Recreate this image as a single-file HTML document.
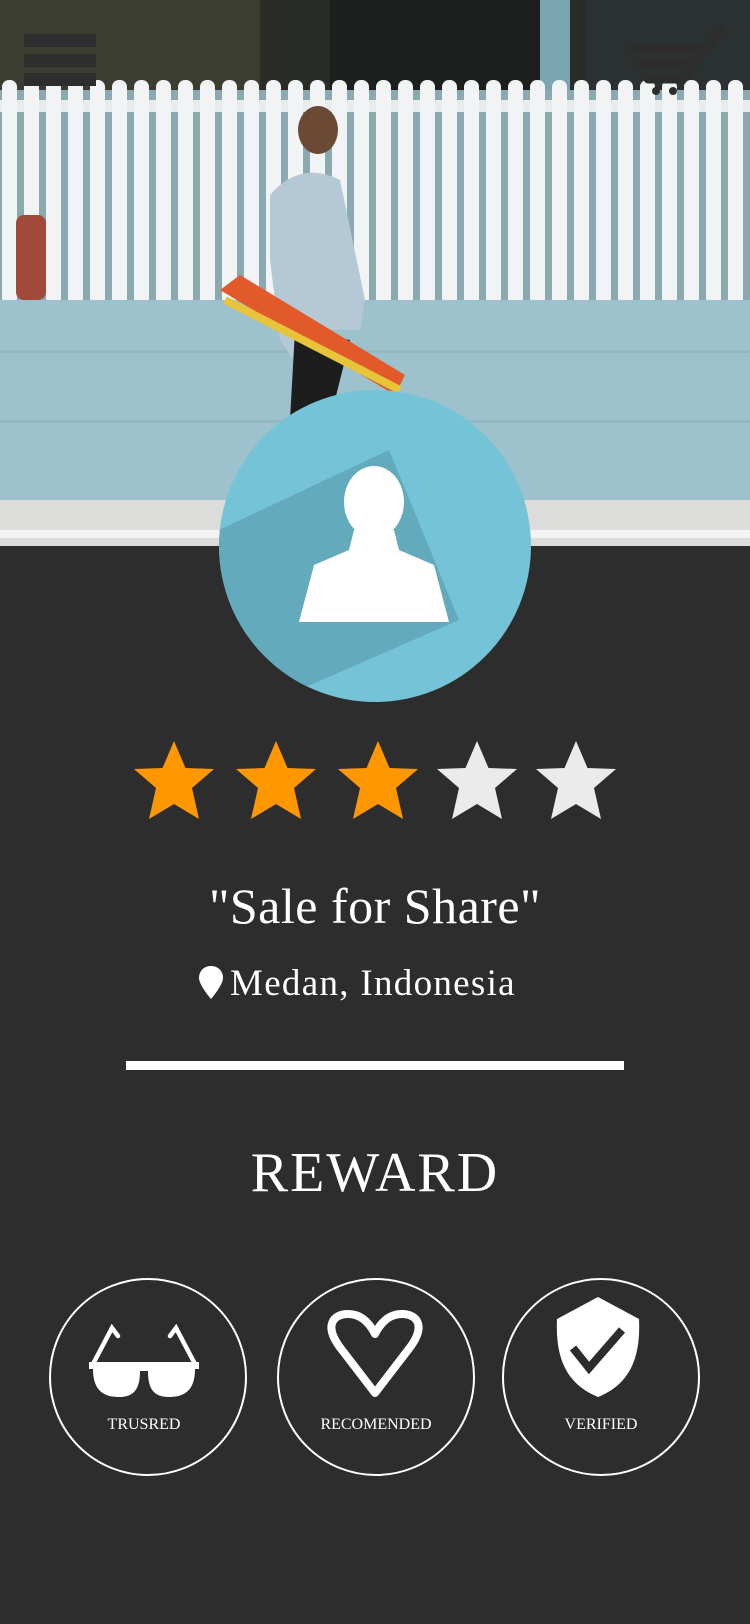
<!DOCTYPE html>
<html><head><meta charset="utf-8"><style>
html,body{margin:0;padding:0;}
body{width:750px;height:1624px;background:#2d2d2d;position:relative;overflow:hidden;font-family:"Liberation Serif",serif;color:#fff;}
.abs{position:absolute;}
.t{position:absolute;left:0;width:750px;text-align:center;white-space:nowrap;}
</style></head><body>
<svg class="abs" style="left:0;top:0" width="750" height="546" viewBox="0 0 750 546">
  <defs>
    <pattern id="fence" x="0" y="0" width="22" height="300" patternUnits="userSpaceOnUse">
      <rect x="2" y="80" width="15" height="225" rx="7" fill="#f1f3f4"/>
    </pattern>
  </defs>
  <rect width="750" height="546" fill="#9cbfcc"/>
  <rect width="750" height="90" fill="#2a2c28"/>
  <rect x="0" y="0" width="260" height="90" fill="#3a3d30"/>
  <rect x="330" y="0" width="210" height="90" fill="#1c1f1e"/>
  <rect x="540" y="0" width="30" height="90" fill="#7aa6b4"/>
  <rect x="585" y="0" width="165" height="90" fill="#2b3130"/>
  <rect x="0" y="90" width="750" height="210" fill="#8aa9b0"/>
  <rect x="0" y="100" width="750" height="12" fill="#e9ecec"/>
  <rect x="0" y="0" width="750" height="305" fill="url(#fence)"/>
  <rect x="0" y="300" width="750" height="200" fill="#9dc1cd"/>
  <rect x="0" y="350" width="750" height="3" fill="#8eb2be" opacity=".6"/>
  <rect x="0" y="420" width="750" height="3" fill="#8eb2be" opacity=".6"/>
  <rect x="0" y="500" width="750" height="46" fill="#dcdcda"/>
  <rect x="0" y="530" width="750" height="8" fill="#f3f3f3"/>
  <rect x="16" y="215" width="30" height="85" rx="8" fill="#a24a3a"/>
  <ellipse cx="318" cy="130" rx="20" ry="24" fill="#6b4a35"/>
  <path d="M270 195 Q300 160 340 180 L365 300 L360 330 L330 330 L300 370 L280 340 L270 260Z" fill="#b5c8d6"/>
  <path d="M295 330 L350 340 L330 420 L300 500 L270 490 L290 420Z" fill="#1d1d1d"/>
  <path d="M220 290 L240 275 L405 375 L395 395Z" fill="#e25a2a"/>
  <path d="M225 300 L400 390" stroke="#e8c43a" stroke-width="8"/>
  <rect x="24" y="34" width="72" height="13" fill="#2d2d2d"/>
  <rect x="24" y="54" width="72" height="13" fill="#2d2d2d"/>
  <rect x="24" y="73" width="72" height="13" fill="#2d2d2d"/>
  <g stroke="#2d2d2d" stroke-width="9" stroke-linecap="round" fill="none">
    <path d="M633 49 H697"/><path d="M641 63 H690"/><path d="M648 79 H683 L721 30"/>
  </g>
  <circle cx="656" cy="91" r="4" fill="#2d2d2d"/><circle cx="673" cy="91" r="4" fill="#2d2d2d"/>
</svg>
<svg class="abs" style="left:219px;top:390px" width="312" height="312" viewBox="0 0 312 312">
  <defs><clipPath id="c"><circle cx="156" cy="156" r="156"/></clipPath></defs>
  <g clip-path="url(#c)">
    <rect width="312" height="312" fill="#74c3d7"/>
    <path d="M0 140 L170 60 L240 230 L80 300 L0 320Z" fill="#63aabc"/>
    <ellipse cx="155" cy="112" rx="30" ry="36" fill="#fff"/>
    <path d="M135 140 L175 140 L180 160 L215 175 L230 232 L80 232 L95 175 L130 160Z" fill="#fff"/>
  </g>
</svg>
<svg class="abs" style="left:0;top:738px" width="750" height="86" viewBox="0 0 750 86">
    <polygon points="0,-40 11.5,-13 40,-12 18,7 25,38 0,23 -25,38 -18,7 -40,-12 -11.5,-13" fill="#ff9800" transform="translate(174,43)"/>
    <polygon points="0,-40 11.5,-13 40,-12 18,7 25,38 0,23 -25,38 -18,7 -40,-12 -11.5,-13" fill="#ff9800" transform="translate(276,43)"/>
    <polygon points="0,-40 11.5,-13 40,-12 18,7 25,38 0,23 -25,38 -18,7 -40,-12 -11.5,-13" fill="#ff9800" transform="translate(378,43)"/>
    <polygon points="0,-40 11.5,-13 40,-12 18,7 25,38 0,23 -25,38 -18,7 -40,-12 -11.5,-13" fill="#ebebeb" transform="translate(477,43)"/>
    <polygon points="0,-40 11.5,-13 40,-12 18,7 25,38 0,23 -25,38 -18,7 -40,-12 -11.5,-13" fill="#ebebeb" transform="translate(576,43)"/>
</svg>
<div class="t" style="top:876px;font-size:50px;line-height:60px;letter-spacing:0.5px;">"Sale for Share"</div>
<svg class="abs" style="left:199px;top:966px" width="24" height="33" viewBox="0 0 24 33"><path d="M12 0 C5 0 0 5 0 12 C0 19 12 33 12 33 C12 33 24 19 24 12 C24 5 19 0 12 0Z" fill="#fff"/></svg>
<div class="abs" style="left:230px;top:963px;font-size:37px;line-height:42px;letter-spacing:1.3px;white-space:nowrap;">Medan, Indonesia</div>
<div class="abs" style="left:126px;top:1061px;width:498px;height:9px;background:#fff;"></div>
<div class="t" style="top:1140px;font-size:56px;line-height:66px;letter-spacing:2px;">REWARD</div>
<svg class="abs" style="left:0;top:1270px" width="750" height="220" viewBox="0 0 750 220">
  <g fill="none" stroke="#fff" stroke-width="2"><circle cx="148" cy="107" r="98"/><circle cx="376" cy="107" r="98"/><circle cx="601" cy="107" r="98"/></g>
  <path d="M89 92 L199 92 L199 99 L195 99 C195 120 185 127 169 127 C153 127 148 118 148 101 L140 101 C140 118 135 127 119 127 C103 127 93 120 93 99 L89 99Z" fill="#fff"/>
  <g stroke="#fff" stroke-width="4.5" stroke-linecap="round" fill="none"><path d="M93 94 L112 58 L118 66"/><path d="M195 94 L176 58 L170 66"/></g>
  <path d="M375 123 L342 80 C322 55 334 44 348 44 C362 44 370 54 375 64 C380 54 388 44 402 44 C416 44 428 55 408 80Z" fill="none" stroke="#fff" stroke-width="8" stroke-linejoin="round"/>
  <path d="M598 27 L639 49 C641 92 627 115 598 127 C569 115 555 92 557 49Z" fill="#fff"/>
  <path d="M573 78 L589 98 L622 60" fill="none" stroke="#2d2d2d" stroke-width="8"/>
  <g fill="#fff" font-family="Liberation Serif, serif" font-size="16" text-anchor="middle">
    <text x="144" y="159">TRUSRED</text><text x="376" y="159">RECOMENDED</text><text x="601" y="159">VERIFIED</text>
  </g>
</svg>
</body></html>
